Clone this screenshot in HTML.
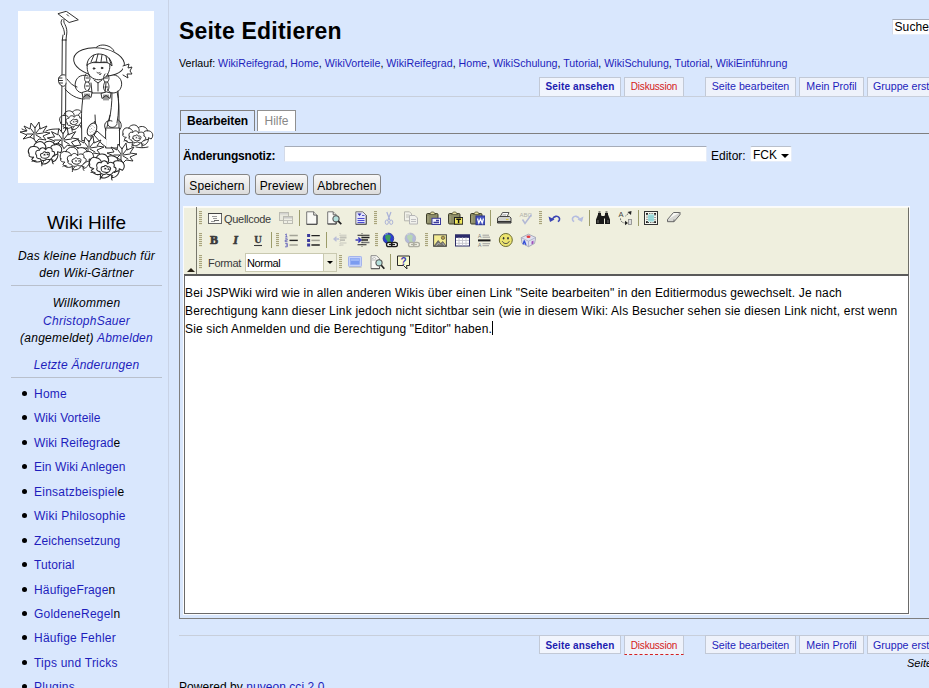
<!DOCTYPE html>
<html lang="de">
<head>
<meta charset="utf-8">
<title>Wiki Hilfe: Seite Editieren</title>
<style>
html,body{margin:0;padding:0;}
body{width:929px;height:688px;overflow:hidden;background:#d9e7fd;font-family:"Liberation Sans",sans-serif;font-size:12px;color:#000;position:relative;}
a{color:#1e1ebc;text-decoration:none;}
#side{position:absolute;left:0;top:0;width:168px;height:688px;border-right:1px solid #c9d3e6;}
#logo{position:absolute;left:18px;top:11px;width:136px;height:172px;background:#fff;}
#appname{position:absolute;left:11px;top:209px;width:151px;text-align:center;font-size:19px;line-height:27px;border-bottom:1px solid #c3cad6;height:22px;}
.sb{position:absolute;left:11px;width:151px;text-align:center;font-style:italic;font-size:12px;line-height:17.3px;letter-spacing:.25px;}
.hr{position:absolute;left:11px;width:151px;height:1px;background:#b9c0cc;}
#menu{position:absolute;left:0;top:382px;margin:0;padding:0;list-style:none;}
#menu li{position:relative;height:24.45px;line-height:24.45px;padding-left:34px;font-size:12px;white-space:nowrap;letter-spacing:.23px;}
#menu li:before{content:"";position:absolute;left:22px;top:9px;width:5px;height:5px;border-radius:50%;background:#000;}
#main{position:absolute;left:179px;top:0;width:750px;height:688px;overflow:hidden;}
h1{position:absolute;left:0;top:17px;margin:0;font-size:23px;line-height:28px;font-weight:bold;white-space:nowrap;letter-spacing:.2px;}
#crumb{position:absolute;left:0;top:56px;font-size:10.67px;line-height:14px;white-space:nowrap;}
#search{position:absolute;left:713px;top:19px;width:60px;height:16px;box-sizing:border-box;background:#fff;border:1px solid #e6edf9;border-top-color:#a6acb8;border-left-color:#d3dae8;font-size:12px;line-height:15px;padding-left:1.5px;white-space:nowrap;letter-spacing:.1px;}
.tabs{position:absolute;left:0;width:900px;height:19px;white-space:nowrap;font-size:10.67px;}
.tab{position:absolute;top:0;height:19px;line-height:17px;background:#eef2fb;border:1px solid #c2c9d6;border-bottom:0;box-sizing:border-box;text-align:center;color:#1e1ebc;}
.tab.act{font-weight:bold;color:#1c1cb0;background:#f1f5fd;font-size:10px;letter-spacing:.13px;}
.bot .tab{border-bottom:1px solid #c2c9d6;height:19px;line-height:19.5px;}
.tab.red{color:#d42020;font-size:10px;letter-spacing:-.2px;}
.line{position:absolute;left:0;width:750px;height:1px;background:#c8cfdb;}
#etabs .et{position:absolute;box-sizing:border-box;font-size:12px;text-align:center;}
#panel{position:absolute;left:0;top:133px;width:760px;height:486px;box-sizing:border-box;border:1px solid #7f7f7f;border-right:0;}
#lbl{position:absolute;left:4px;top:149px;font-weight:bold;font-size:12px;line-height:15px;white-space:nowrap;letter-spacing:-.2px;}
#note{position:absolute;left:105px;top:146px;width:423px;height:16px;box-sizing:border-box;background:#fff;border:1px solid #e6edf9;border-top-color:#a6acb8;border-left-color:#d3dae8;border-radius:1px;}
#edl{position:absolute;left:532px;top:149px;font-size:12px;line-height:15px;}
#sel{position:absolute;left:571px;top:146px;width:42px;height:16px;box-sizing:border-box;background:#fff;border:1px solid #e6edf9;border-top-color:#b9c0cc;border-radius:2px;font-size:12px;line-height:17px;padding-left:2px;}
#sel:after{content:"";position:absolute;right:2px;top:6.5px;border:4px solid transparent;border-top:4px solid #000;border-bottom:0;}
.btn{position:absolute;top:174px;height:21px;box-sizing:border-box;border:1px solid #858585;border-radius:3px;background:linear-gradient(#f8f8f8,#dcdcdc);font-size:12px;line-height:22px;text-align:center;white-space:nowrap;letter-spacing:.15px;}
#fck{position:absolute;left:4px;top:206px;width:727px;height:409px;box-sizing:border-box;border:1px solid #fafbfd;}
#tb{position:absolute;left:5px;top:207px;width:725px;height:67px;background:#efefde;border-top:1px solid #fbfbf4;border-right:1px solid #6e6e68;box-sizing:border-box;}
#tbh{position:absolute;left:0;top:-1px;width:12px;height:67px;border-right:1px solid #77776c;}
#tbh:after{content:"";position:absolute;left:2.5px;top:61px;border:4px solid transparent;border-bottom:4px solid #2a2418;border-top:0;}
.ic{position:absolute;}
.grip{position:absolute;width:3px;height:14px;background:repeating-linear-gradient(#a9a47c 0,#a9a47c 1px,#e6e6d0 1px,#e6e6d0 2px);}
.sep{position:absolute;width:1px;height:16px;background:#9c9c6a;}
.tbl{position:absolute;font-size:11px;line-height:16px;color:#3a3a3a;white-space:nowrap;letter-spacing:-0.3px;}
.combo{position:absolute;width:92px;height:19px;box-sizing:border-box;background:#fff;border:1px solid #c9c9b0;font-size:11px;line-height:17px;color:#000;}
.combo span{position:absolute;left:1px;top:1px;letter-spacing:-0.35px;}
.combo b{position:absolute;right:0;top:0;width:12px;height:17px;background:#efefde;border-left:1px solid #c9c9b0;}
.combo b:after{content:"";position:absolute;left:3px;top:7px;border:3px solid transparent;border-top:3px solid #000;border-bottom:0;}
#ed{position:absolute;left:5px;top:274px;width:725px;height:340px;box-sizing:border-box;background:#fff;border:1px solid #6a6a6a;border-top:2px solid #5a5a5a;}
#ed p{margin:0;position:absolute;left:0;top:8px;font-size:12px;line-height:18px;white-space:nowrap;letter-spacing:0.153px;}
#foot1{position:absolute;right:0;top:657px;font-size:11px;font-style:italic;white-space:nowrap;}
#pow{position:absolute;left:0;top:680px;letter-spacing:.05px;font-size:12px;line-height:15px;white-space:nowrap;}
</style>
</head>
<body>
<div id="side">
  <div id="logo"><svg width="136" height="172" viewBox="0 0 136 172"><g fill="none" stroke="#262626" stroke-width=".95" stroke-linejoin="round" stroke-linecap="round"><path d="M28 120c4-2 8-2 12-2M118 136c4 1 8 1 12 0M4 118c2 1 4 2 6 2"/><g transform="translate(56.0 110.0) rotate(-10) scale(0.90)"><path d="M-15-1c-2-4 1-8 5-7 1-4 7-6 10-2 3-3 9-2 10 2 5-1 8 4 5 8l-3-1c1 4-1 8-5 9l-2-3c-2 4-6 5-9 4l0-3c-3 2-7 1-9-2l2-2c-3 0-5-1-4-3z" fill="#fff"/><path d="M-10-8c2 0 4 1 5 3M0-10c1 1 2 3 1 5M10-8c-2 0-4 1-4 3M12 1c-2 0-3 1-4 2M7 10c-1-1-1-3 0-4M-4 11c0-2 1-3 2-4M-13 6c1-1 3-1 4 0" fill="none"/><path d="M-8 1c-2-3 0-6 3-5 1-3 5-3 6 0 2-3 7-2 6 2 3 0 3 4 0 5-1 3-4 3-6 2-2 2-6 1-6-1-2 0-4-1-3-3z" fill="#fff"/><path d="M-4 2c-1-2 0-3 2-3 1-2 3-1 3 0 2-1 4 0 3 2 0 2-2 3-4 3s-4-1-4-2z" fill="none"/><path d="M-1 1c0-1 1-1 1 0M2 1c0-1 1-1 1 0" fill="none"/></g><g transform="translate(119.0 126.0) rotate(8) scale(0.95)"><path d="M-15-1c-2-4 1-8 5-7 1-4 7-6 10-2 3-3 9-2 10 2 5-1 8 4 5 8l-3-1c1 4-1 8-5 9l-2-3c-2 4-6 5-9 4l0-3c-3 2-7 1-9-2l2-2c-3 0-5-1-4-3z" fill="#fff"/><path d="M-10-8c2 0 4 1 5 3M0-10c1 1 2 3 1 5M10-8c-2 0-4 1-4 3M12 1c-2 0-3 1-4 2M7 10c-1-1-1-3 0-4M-4 11c0-2 1-3 2-4M-13 6c1-1 3-1 4 0" fill="none"/><path d="M-8 1c-2-3 0-6 3-5 1-3 5-3 6 0 2-3 7-2 6 2 3 0 3 4 0 5-1 3-4 3-6 2-2 2-6 1-6-1-2 0-4-1-3-3z" fill="#fff"/><path d="M-4 2c-1-2 0-3 2-3 1-2 3-1 3 0 2-1 4 0 3 2 0 2-2 3-4 3s-4-1-4-2z" fill="none"/><path d="M-1 1c0-1 1-1 1 0M2 1c0-1 1-1 1 0" fill="none"/></g><g transform="translate(16.0 122.0) scale(1.00)"><path d="M0 6l-4-2-7 2 4-4-7-3 7-1-3-5 6 3 1-6 4 5 4-6 1 7 7-3-4 6 7 1-7 3 3 4-7-1-3 3z" fill="#fff"/><path d="M0 6l0-5M-4 4l3-3M-7 1l6 0M-3-4l3 4M1-6l0 6M6-5l-4 5M9 0l-7 1M7 5l-5-3" fill="none"/></g><path d="M40.300 2.600l8-2.300 12 8.500-8.800 2.600z" fill="#fff"/><path d="M49 3.500l1.500 1.500"/><path d="M44 8.500c-1.500 2-1 4 0 6 1.500 3 2.500 5 2.500 9M46 8.500c-.5 2 0 3.500 1 5 1.500 3 2.300 6 1.700 10"/><path d="M44.300 29l-.8 95M48 29l-.5 95M44.500 29h3.500M45 24l-.7 5M48.500 24l-.5 5" /><path d="M66 80c-2 10-2.500 20-2.500 30l.300 19.500 9 .5c.500-6 1-12 3-17 1-3 1-5 1-8" fill="#fff"/><path d="M98 76c2 8 3 16 3 24v18l-4 1.500" fill="none"/><path d="M66 80h32v30H64z" fill="#fff" stroke="none"/><path d="M77 104c0 4 .5 8 1 12M92 104c-1 4-2 8-3 12"/><path d="M73 72l1 10h13l1-10" fill="#fff"/><path d="M76 69l4 3 4-3M80 72v8"/><path d="M70 65c-5-2-11 0-12.500 6s2 11 8 11c3 0 5-2 5.500-4" fill="#fff"/><path d="M89 65c5-3 13-1 14.500 6 1 6-3 11-8.500 11-3 0-5-2-5.500-4" fill="#fff"/><path d="M59 76c-4-1-7-4-10-8M66 88c-7 0-14-4-19-10" /><path d="M47 64c-3-1-6 1-6.500 4s1 6 3.500 7 4-1 4-3" fill="#fff"/><path d="M41 67h3M41 69.500h3.500M41.500 72h3"/><path d="M100 80c1 10 1 22-1 32M94 82c0 10-1 20-3 28" /><path d="M90 110c-1 3 0 5 2 6 3 1 6 0 7-3" fill="#fff"/><path d="M77 38c2-4 8-5 13-3 3 1 5 3 6 5" fill="#fff"/><ellipse cx="81" cy="51" rx="25.500" ry="14" transform="rotate(8 81 51)" fill="#fff"/><path d="M69.500 52c-1 6 0 12 5 15s11 2 14-2 4-9 3-13z" fill="#fff"/><path d="M69 54c0-6 5-11 12-11s13 5 13 12c-3-3-5-4-8-4l-4 .5-4-.5c-3 0-6 1-9 3z" fill="#fff"/><path d="M76 44l-3 7M80 43l-2 8M84 43.500l-1 7.500M88 45l1 6M91 47l2 6" /><circle cx="76" cy="57.500" r=".8" fill="#2e2e2e"/><circle cx="84" cy="57" r=".8" fill="#2e2e2e"/><path d="M79 61.500c1 .8 2 .8 3 0M81.500 63.500c.8.500 1.500 0 1.500-1"/><path d="M68 63c-2 3-2 6 0 8-2 3-2 6 0 8M70.500 63c2 3 2 6 0 8 2 3 2 6 0 8M68 67h2.500M68 71h2.500M68 75h2.500" /><path d="M87 63c-2 3-2 6 0 8-2 3-2 7 0 9M89.500 63c2 3 2 6 0 8 2 3 2 7 0 9M87 67h2.500M87 71h2.500M87 76h2.500" /><path d="M69 80l-5 1.500 1 5 4-3 4 3 1-5zM67 83v5M69 83v5M71 83v5" fill="#fff"/><path d="M88 81l-5 1.500 1 5 4-3 4 3 1-5zM86 84v5M88 84v5M90 84v5" fill="#fff"/><path d="M105 55l6-2-1 4 4-1-2 4 2 3-5 0 1 4-5-3" fill="#fff"/><path d="M88 117h13.500v20H88z" fill="#fff"/><path d="M88 128l-9-8 -3 4 8 9 4 3" fill="#fff"/><ellipse cx="74" cy="118.500" rx="4.300" ry="6.800" transform="rotate(25 74 118.500)" fill="#fff"/><g stroke-width=".5"><path d="M72 115l.3.300M74 114.500l.3.300M76 116l.3.300M71.500 118l.3.300M73.500 117.500l.3.300M75.500 119l.3.300M72 121l.3.300M74 120.500l.3.300M76 122l.3.300M73 123.500l.3.300"/></g><path d="M88 119c-4-6 1-11 6-9M101.500 119c3-3 2-8-1-10"/><g transform="translate(44.0 128.0) scale(1.05)"><path d="M0 6l-4-2-7 2 4-4-7-3 7-1-3-5 6 3 1-6 4 5 4-6 1 7 7-3-4 6 7 1-7 3 3 4-7-1-3 3z" fill="#fff"/><path d="M0 6l0-5M-4 4l3-3M-7 1l6 0M-3-4l3 4M1-6l0 6M6-5l-4 5M9 0l-7 1M7 5l-5-3" fill="none"/></g><g transform="translate(70.0 136.0) scale(1.00)"><path d="M0 6l-4-2-7 2 4-4-7-3 7-1-3-5 6 3 1-6 4 5 4-6 1 7 7-3-4 6 7 1-7 3 3 4-7-1-3 3z" fill="#fff"/><path d="M0 6l0-5M-4 4l3-3M-7 1l6 0M-3-4l3 4M1-6l0 6M6-5l-4 5M9 0l-7 1M7 5l-5-3" fill="none"/></g><g transform="translate(103.0 143.0) scale(1.00)"><path d="M0 6l-4-2-7 2 4-4-7-3 7-1-3-5 6 3 1-6 4 5 4-6 1 7 7-3-4 6 7 1-7 3 3 4-7-1-3 3z" fill="#fff"/><path d="M0 6l0-5M-4 4l3-3M-7 1l6 0M-3-4l3 4M1-6l0 6M6-5l-4 5M9 0l-7 1M7 5l-5-3" fill="none"/></g><g transform="translate(27.0 143.0) rotate(-5) scale(1.05)"><path d="M-15-1c-2-4 1-8 5-7 1-4 7-6 10-2 3-3 9-2 10 2 5-1 8 4 5 8l-3-1c1 4-1 8-5 9l-2-3c-2 4-6 5-9 4l0-3c-3 2-7 1-9-2l2-2c-3 0-5-1-4-3z" fill="#fff"/><path d="M-10-8c2 0 4 1 5 3M0-10c1 1 2 3 1 5M10-8c-2 0-4 1-4 3M12 1c-2 0-3 1-4 2M7 10c-1-1-1-3 0-4M-4 11c0-2 1-3 2-4M-13 6c1-1 3-1 4 0" fill="none"/><path d="M-8 1c-2-3 0-6 3-5 1-3 5-3 6 0 2-3 7-2 6 2 3 0 3 4 0 5-1 3-4 3-6 2-2 2-6 1-6-1-2 0-4-1-3-3z" fill="#fff"/><path d="M-4 2c-1-2 0-3 2-3 1-2 3-1 3 0 2-1 4 0 3 2 0 2-2 3-4 3s-4-1-4-2z" fill="none"/><path d="M-1 1c0-1 1-1 1 0M2 1c0-1 1-1 1 0" fill="none"/></g><g transform="translate(58.5 149.0) rotate(0) scale(1.05)"><path d="M-15-1c-2-4 1-8 5-7 1-4 7-6 10-2 3-3 9-2 10 2 5-1 8 4 5 8l-3-1c1 4-1 8-5 9l-2-3c-2 4-6 5-9 4l0-3c-3 2-7 1-9-2l2-2c-3 0-5-1-4-3z" fill="#fff"/><path d="M-10-8c2 0 4 1 5 3M0-10c1 1 2 3 1 5M10-8c-2 0-4 1-4 3M12 1c-2 0-3 1-4 2M7 10c-1-1-1-3 0-4M-4 11c0-2 1-3 2-4M-13 6c1-1 3-1 4 0" fill="none"/><path d="M-8 1c-2-3 0-6 3-5 1-3 5-3 6 0 2-3 7-2 6 2 3 0 3 4 0 5-1 3-4 3-6 2-2 2-6 1-6-1-2 0-4-1-3-3z" fill="#fff"/><path d="M-4 2c-1-2 0-3 2-3 1-2 3-1 3 0 2-1 4 0 3 2 0 2-2 3-4 3s-4-1-4-2z" fill="none"/><path d="M-1 1c0-1 1-1 1 0M2 1c0-1 1-1 1 0" fill="none"/></g><g transform="translate(88.0 157.0) rotate(8) scale(1.10)"><path d="M-15-1c-2-4 1-8 5-7 1-4 7-6 10-2 3-3 9-2 10 2 5-1 8 4 5 8l-3-1c1 4-1 8-5 9l-2-3c-2 4-6 5-9 4l0-3c-3 2-7 1-9-2l2-2c-3 0-5-1-4-3z" fill="#fff"/><path d="M-10-8c2 0 4 1 5 3M0-10c1 1 2 3 1 5M10-8c-2 0-4 1-4 3M12 1c-2 0-3 1-4 2M7 10c-1-1-1-3 0-4M-4 11c0-2 1-3 2-4M-13 6c1-1 3-1 4 0" fill="none"/><path d="M-8 1c-2-3 0-6 3-5 1-3 5-3 6 0 2-3 7-2 6 2 3 0 3 4 0 5-1 3-4 3-6 2-2 2-6 1-6-1-2 0-4-1-3-3z" fill="#fff"/><path d="M-4 2c-1-2 0-3 2-3 1-2 3-1 3 0 2-1 4 0 3 2 0 2-2 3-4 3s-4-1-4-2z" fill="none"/><path d="M-1 1c0-1 1-1 1 0M2 1c0-1 1-1 1 0" fill="none"/></g></g></svg></div>
  <div id="appname">Wiki Hilfe</div>
  <div class="sb" style="top:248px;line-height:17px">Das kleine Handbuch für<br>den Wiki-Gärtner</div>
  <div class="hr" style="top:285px"></div>
  <div class="sb" style="top:295px">Willkommen</div>
  <div class="sb" style="top:312.5px"><a href="#">ChristophSauer</a></div>
  <div class="sb" style="top:329.5px">(angemeldet) <a href="#">Abmelden</a></div>
  <div class="sb" style="top:357px"><a href="#">Letzte Änderungen</a></div>
  <div class="hr" style="top:377px"></div>
  <ul id="menu">
    <li><a href="#">Home</a></li>
    <li style="letter-spacing:.04px"><a href="#">Wiki Vorteile</a></li>
    <li style="letter-spacing:.11px"><a href="#">Wiki Reifegrad</a>e</li>
    <li style="letter-spacing:.09px"><a href="#">Ein Wiki Anlegen</a></li>
    <li><a href="#">Einsatzbeispiel</a>e</li>
    <li><a href="#">Wiki Philosophie</a></li>
    <li style="letter-spacing:.12px"><a href="#">Zeichensetzung</a></li>
    <li style="letter-spacing:.12px"><a href="#">Tutorial</a></li>
    <li style="letter-spacing:.15px"><a href="#">HäufigeFrage</a>n</li>
    <li><a href="#">GoldeneRegel</a>n</li>
    <li><a href="#">Häufige Fehler</a></li>
    <li><a href="#">Tips und Tricks</a></li>
    <li><a href="#">Plugins</a></li>
  </ul>
</div>
<div id="main">
  <h1>Seite Editieren</h1>
  <div id="search">Suche</div>
  <div id="crumb">Verlauf: <a href="#">WikiReifegrad</a>, <a href="#">Home</a>, <a href="#">WikiVorteile</a>, <a href="#">WikiReifegrad</a>, <a href="#">Home</a>, <a href="#">WikiSchulung</a>, <a href="#">Tutorial</a>, <a href="#">WikiSchulung</a>, <a href="#">Tutorial</a>, <a href="#">WikiEinführung</a></div>

  <div class="tabs" style="top:77px">
    <div class="tab act" style="left:360px;width:82px">Seite ansehen</div>
    <div class="tab red" style="left:445px;width:60px">Diskussion</div>
    <div class="tab" style="left:526px;width:91px">Seite bearbeiten</div>
    <div class="tab" style="left:620px;width:65px">Mein Profil</div>
    <div class="tab" style="left:688px;width:100px;text-align:left;padding-left:5px">Gruppe erstellen</div>
  </div>
  <div class="line" style="top:96px"></div>

  <div id="panel"></div>
  <div id="etabs">
    <div class="et" style="left:1px;top:110px;width:75px;height:21px;border:1px solid #808080;border-bottom:0;background:#d9e7fd;font-weight:bold;line-height:20px;letter-spacing:-.1px">Bearbeiten</div>
    <div class="et" style="left:78px;top:110px;width:39px;height:21px;border:1px solid #909090;border-bottom:0;background:#fff;color:#888;line-height:20px">Hilfe</div>
  </div>

  <div id="lbl">Änderungsnotiz:</div>
  <div id="note"></div>
  <div id="edl">Editor:</div>
  <div id="sel">FCK</div>
  <div class="btn" style="left:5px;width:66px">Speichern</div>
  <div class="btn" style="left:76px;width:53px">Preview</div>
  <div class="btn" style="left:134px;width:68px">Abbrechen</div>

  <div id="fck"></div>
  <div id="tb">
    <div id="tbh"></div>
<i class="grip" style="left:15px;top:3px"></i>
<svg class="ic" style="left:23px;top:2px" width="16" height="16" viewBox="0 0 16 16"><rect x="1.500" y="3.500" width="13" height="10" fill="#fbfbf6" stroke="#666"/><path d="M1 3.500h14" stroke="#444"/><path d="M5 6.500h5M6 8.500h4M4 11.500h4" stroke="#999" fill="none"/><path d="M7 10.500h5" stroke="#666" fill="none"/></svg>
<span class="tbl" style="left:40px;top:3px">Quellcode</span>
<svg class="ic" style="left:94px;top:2px" width="16" height="16" viewBox="0 0 16 16"><g opacity=".5"><rect x="1.500" y="2.500" width="9" height="8" fill="#e4e4e0" stroke="#888"/><rect x="5.500" y="6.500" width="9" height="7" fill="#f0f0ec" stroke="#888"/><path d="M6 10.500h8.500M9.500 10.500v3" stroke="#999" fill="none"/><rect x="6" y="7" width="8" height="1.500" fill="#a8a8b8"/><rect x="2" y="3" width="8" height="1.500" fill="#b8b8c4"/></g></svg>
<i class="sep" style="left:115px;top:2px"></i>
<svg class="ic" style="left:120px;top:2px" width="16" height="16" viewBox="0 0 16 16"><path d="M2.700 1.800h7l3.300 3.300v9.200H2.700z" fill="#f9f9f5" stroke="#777"/><path d="M9.700 1.800v3.300h3.300" fill="#e8e8e0" stroke="#666"/><path d="M13 5.100v9.200H2.700" fill="none" stroke="#444"/></svg>
<svg class="ic" style="left:142px;top:2px" width="16" height="16" viewBox="0 0 16 16"><path d="M1.700 1.800h5.500l3 3v9.200H1.700z" fill="#f9f9f5" stroke="#777"/><path d="M7.200 1.800v3h3" fill="#e8e8e0" stroke="#666"/><path d="M10.200 12v2H1.700" fill="none" stroke="#444"/><circle cx="10" cy="8.800" r="3.100" fill="#b4e0dc" stroke="#555" stroke-width="1.100"/><path d="M12.300 11.200l3 3" stroke="#222" stroke-width="1.700" fill="none"/></svg>
<svg class="ic" style="left:169px;top:2px" width="16" height="16" viewBox="0 0 16 16"><path d="M2.800 1.800h7l3.500 3.500v9H2.800z" fill="#e4e4fb" stroke="#777"/><path d="M13.300 5.300v9H2.800" fill="none" stroke="#555"/><path d="M4.500 3.500h4l-2 2.500z" fill="#2a2ab0"/><path d="M9 5.500h2.500" stroke="#5a5ac8"/><path d="M4.500 8.500h7M4.500 10.500h7M4.500 12.500h7" stroke="#4a4ad0" stroke-width="1" fill="none"/></svg>
<i class="grip" style="left:190px;top:3px"></i>
<svg class="ic" style="left:197px;top:2px" width="16" height="16" viewBox="0 0 16 16"><g stroke="#aab2d8" fill="none"><path d="M5.800 2l3 8M10 2L7 10" stroke-width="1.200"/><ellipse cx="5.800" cy="12.200" rx="1.600" ry="2.200"/><ellipse cx="10.200" cy="12.200" rx="1.600" ry="2.200"/></g></svg>
<svg class="ic" style="left:219px;top:2px" width="16" height="16" viewBox="0 0 16 16"><g opacity=".55"><path d="M1.500 1.800h5l2 2v7h-7z" fill="#f4f4f4" stroke="#888"/><path d="M3 5h3.500M3 7h3" stroke="#999" fill="none"/><path d="M6.500 5.500h5.500l2.500 2.500v6h-8z" fill="#f4f4f8" stroke="#889"/><path d="M8 9.500h5M8 11.500h5" stroke="#99a" fill="none"/></g></svg>
<svg class="ic" style="left:241px;top:2px" width="16" height="16" viewBox="0 0 16 16"><rect x="1.500" y="3.500" width="11.500" height="10.500" rx="1.200" fill="#8e8e68" stroke="#3c3c2a"/><path d="M4.500 4.500l1.800-2.500h2.400l1.800 2.500z" fill="#e4dca0" stroke="#55553a" stroke-width=".8"/><path d="M3 6v6.500" stroke="#a8a884"/><rect x="7" y="8.300" width="8.500" height="6.200" fill="#f4f4ff" stroke="#3a3a9c"/><path d="M8.500 12.500h5.500M11 10.500h3" stroke="#3a3a9c" stroke-width="1.300"/></svg>
<svg class="ic" style="left:263px;top:2px" width="16" height="16" viewBox="0 0 16 16"><rect x="1.500" y="3.500" width="11.500" height="10.500" rx="1.200" fill="#8e8e68" stroke="#3c3c2a"/><path d="M4.500 4.500l1.800-2.500h2.400l1.800 2.500z" fill="#e4dca0" stroke="#55553a" stroke-width=".8"/><path d="M3 6v6.500" stroke="#a8a884"/><rect x="7.500" y="7.500" width="8.200" height="6.700" fill="#f0e85c" stroke="#222"/><path d="M9.300 9.300h4.600M11.600 9.300v4" stroke="#111" stroke-width="1.500" fill="none"/></svg>
<svg class="ic" style="left:285px;top:2px" width="16" height="16" viewBox="0 0 16 16"><rect x="1.500" y="3.500" width="11.500" height="10.500" rx="1.200" fill="#8e8e68" stroke="#3c3c2a"/><path d="M4.500 4.500l1.800-2.500h2.400l1.800 2.500z" fill="#e4dca0" stroke="#55553a" stroke-width=".8"/><path d="M3 6v6.500" stroke="#a8a884"/><rect x="7" y="6" width="9" height="8.700" fill="#4a58c4" stroke="#2a3490"/><path d="M8.500 8.500l1.300 4.500 1.700-4 1.700 4 1.300-4.500" stroke="#fff" stroke-width="1.200" fill="none"/></svg>
<i class="sep" style="left:306px;top:2px"></i>
<svg class="ic" style="left:312px;top:2px" width="16" height="16" viewBox="0 0 16 16"><path d="M4 7l2.500-4.500h6.500l-2 4.500z" fill="#fafafa" stroke="#555"/><path d="M6.500 4.500h4M6 5.800h4" stroke="#aaa" stroke-width=".7"/><path d="M1.500 8l2-1.500h10l1.500 1.500v3.500h-13.500z" fill="#d0d0cc" stroke="#444"/><path d="M1.500 11.500h13.500v1.500h-13.500z" fill="#777" stroke="#333"/><path d="M10 9.500h2.500" stroke="#d8c840" stroke-width="1.200"/></svg>
<svg class="ic" style="left:334px;top:2px" width="16" height="16" viewBox="0 0 16 16"><g opacity=".6"><text x="1.500" y="6.500" font-family="Liberation Sans,sans-serif" font-size="6" fill="#888">ABC</text><path d="M4.500 9.500l2.500 4L13.500 4.500" stroke="#8a94d0" stroke-width="1.500" fill="none"/></g></svg>
<i class="grip" style="left:355px;top:3px"></i>
<svg class="ic" style="left:363px;top:2px" width="16" height="16" viewBox="0 0 16 16"><path d="M5.500 9c1.500-3 5-3.500 6.500-1.500 1.200 1.700.3 3.500-1.200 4" stroke="#3a44b4" stroke-width="1.600" fill="none"/><path d="M1.500 6.500l1.500 5.500 4.500-2.500z" fill="#3a44b4"/></svg>
<svg class="ic" style="left:385px;top:2px" width="16" height="16" viewBox="0 0 16 16"><path d="M10.500 9c-1.500-3-5-3.500-6.500-1.500-1.200 1.700-.3 3.500 1.200 4" stroke="#b4bce0" stroke-width="1.600" fill="none"/><path d="M14.500 6.500l-1.500 5.500-4.500-2.500z" fill="#b4bce0"/></svg>
<i class="sep" style="left:405px;top:2px"></i>
<svg class="ic" style="left:411px;top:2px" width="16" height="16" viewBox="0 0 16 16"><path d="M1 14V9.500l2-5V3h3v1.500l.5 1.500h3l.5-1.500V3h3v1.500l2 5V14h-5V8.500h-1V14z" fill="#1a1a1a"/><path d="M3.500 2h2M10.500 2h2" stroke="#1a1a1a" stroke-width="1.200"/><path d="M3 10v3M13 10v3" stroke="#888" stroke-width=".8"/></svg>
<svg class="ic" style="left:433px;top:2px" width="16" height="16" viewBox="0 0 16 16"><text x="1.500" y="7" font-family="Liberation Sans,sans-serif" font-size="7.500" fill="#444">A</text><rect x="11.500" y="9.500" width="3" height="5" fill="#ddd" stroke="#888" stroke-width=".8"/><path d="M3.500 8.500c0 3 2 4.500 5 4.500" stroke="#555" stroke-dasharray="1.200 1" fill="none"/><path d="M8 10.800l3 2.200-3 2.200z" fill="#222"/><path d="M8.500 6l4-3.500" stroke="#555" stroke-dasharray="1.200 1"/><path d="M14.500 1l-.5 4-3.500-3z" fill="#222"/></svg>
<i class="sep" style="left:454px;top:2px"></i>
<svg class="ic" style="left:459px;top:2px" width="16" height="16" viewBox="0 0 16 16"><rect x="1.500" y="1.500" width="13" height="13" fill="#f6f6ee" stroke="#333"/><rect x="5" y="4.500" width="6" height="7" fill="#a4e0e0"/><path d="M7 4.500v7M9 4.500v7M5 7h6M5 9.500h6" stroke="#8accd0" stroke-width=".6"/><rect x="4" y="3.500" width="8" height="9" fill="none" stroke="#333" stroke-width=".9" stroke-dasharray="1 1.300"/><path d="M3 3h1.800v1.800H3zM11.200 3H13v1.800h-1.800zM3 11.200h1.800V13H3zM11.200 11.200H13V13h-1.800z" fill="#222"/></svg>
<svg class="ic" style="left:482px;top:2px" width="16" height="16" viewBox="0 0 16 16"><path d="M1.500 9.500L7.500 2.500h6.500L8 9.500z" fill="#f8f8f4" stroke="#666"/><path d="M1.500 9.500v2.200H8l6-7V2.500M8 9.500v2.200" fill="#d8d8d4" stroke="#666"/></svg>
<i class="grip" style="left:15px;top:25px"></i>
<svg class="ic" style="left:22px;top:24px" width="16" height="16" viewBox="0 0 16 16"><text x="8" y="12" text-anchor="middle" font-family="Liberation Serif,serif" font-size="12" font-weight="bold" fill="#3a3a3a" stroke="#3a3a3a" stroke-width=".7">B</text></svg>
<svg class="ic" style="left:44px;top:24px" width="16" height="16" viewBox="0 0 16 16"><text x="7.500" y="12" text-anchor="middle" font-family="Liberation Serif,serif" font-size="12" font-weight="bold" font-style="italic" fill="#3a3a3a" stroke="#3a3a3a" stroke-width=".6">I</text></svg>
<svg class="ic" style="left:66px;top:24px" width="16" height="16" viewBox="0 0 16 16"><text x="8" y="11" text-anchor="middle" font-family="Liberation Serif,serif" font-size="10.500" font-weight="bold" fill="#3a3a3a" stroke="#3a3a3a" stroke-width=".3">U</text><path d="M4 13.500h8" stroke="#3a3a3a" stroke-width="1.100"/></svg>
<i class="sep" style="left:87px;top:24px"></i>
<i class="grip" style="left:92px;top:25px"></i>
<svg class="ic" style="left:99px;top:24px" width="16" height="16" viewBox="0 0 16 16"><path d="M6.500 3.600h8.300M6.500 13h8.300" stroke="#a4a498" stroke-width="1.500"/><path d="M6.500 8.400h8.300" stroke="#222" stroke-width="1.400"/><path d="M3.300 1.800v3.200M2.300 2.800l1-1M2.200 5h2.300M2.200 6.800h2v1.400h-2v1.500h2.300M2.200 11.400h2.100v3.400h-2.300M2.800 13h1.500" stroke="#4a4ab4" stroke-width=".75" fill="none"/></svg>
<svg class="ic" style="left:121px;top:24px" width="16" height="16" viewBox="0 0 16 16"><path d="M6.400 3.600h8.400M6.400 13h8.400" stroke="#222" stroke-width="1.400"/><path d="M6.400 8.400h8.400" stroke="#a4a498" stroke-width="1.500"/><path d="M2.100 2h3v3h-3zM2.100 6.900h3v3h-3zM2.100 11.500h3v3h-3z" fill="#3a3a9c"/></svg>
<i class="sep" style="left:142px;top:24px"></i>
<svg class="ic" style="left:148px;top:24px" width="16" height="16" viewBox="0 0 16 16"><g opacity=".45"><path d="M7.500 3.200h7M8 11h6.500M7.500 13h4" stroke="#999" stroke-width="1"/><path d="M8 5.500h6.500M8 8.200h5" stroke="#888" stroke-width="1.800"/><path d="M7 7H2.500M4.500 4.800L2 7l2.500 2.200" stroke="#7a84d0" stroke-width="1.300" fill="none"/><path d="M8 1v14" stroke="#999" stroke-dasharray="1 1" stroke-width=".7"/></g></svg>
<svg class="ic" style="left:170px;top:24px" width="16" height="16" viewBox="0 0 16 16"><path d="M3.500 3.200h12M3.500 12.800h9" stroke="#222" stroke-width="1.100"/><path d="M7.500 5.500h8M7.500 8h6.500" stroke="#222" stroke-width="1.700"/><path d="M7.500 10.500h8" stroke="#777" stroke-width="1.500"/><path d="M1.500 8h5M4.300 5.500L7 8l-2.700 2.500" stroke="#3a3ab8" stroke-width="1.500" fill="none"/><path d="M8 1v14" stroke="#333" stroke-dasharray="1 1.200" stroke-width=".8"/></svg>
<i class="grip" style="left:191px;top:25px"></i>
<svg class="ic" style="left:198px;top:24px" width="16" height="16" viewBox="0 0 16 16"><circle cx="6.400" cy="6.400" r="5.300" fill="#2c3ed0" stroke="#26308a" stroke-width=".8"/><path d="M3.500 3.500c1.500-1.500 4-1.500 5 0s-.5 2.500-.5 4 1.500 1.500 1 3-3 .5-3.500-1S2 6 3.500 3.500z" fill="#3c9c5c"/><path d="M3 3c.8-.8 2-1.300 3-1.300" stroke="#8aa4f0" stroke-width=".9" fill="none"/><rect x="4.500" y="10.300" width="6" height="4.400" rx="2.200" fill="#f0f0ec" stroke="#1c1c1c" stroke-width="1.300"/><rect x="9.500" y="10.300" width="6" height="4.400" rx="2.200" fill="#f0f0ec" stroke="#1c1c1c" stroke-width="1.300"/><path d="M7 12.500h6" stroke="#1c1c1c" stroke-width="1.300"/></svg>
<svg class="ic" style="left:220px;top:24px" width="16" height="16" viewBox="0 0 16 16"><g opacity=".3"><circle cx="6.400" cy="6.400" r="5.300" fill="#2c3ed0" stroke="#26308a" stroke-width=".8"/><path d="M3.500 3.500c1.500-1.500 4-1.500 5 0s-.5 2.500-.5 4 1.500 1.500 1 3-3 .5-3.500-1S2 6 3.500 3.500z" fill="#3c9c5c"/><path d="M3 3c.8-.8 2-1.300 3-1.300" stroke="#8aa4f0" stroke-width=".9" fill="none"/><rect x="4.500" y="10.300" width="6" height="4.400" rx="2.200" fill="#f0f0ec" stroke="#1c1c1c" stroke-width="1.300"/><rect x="9.500" y="10.300" width="6" height="4.400" rx="2.200" fill="#f0f0ec" stroke="#1c1c1c" stroke-width="1.300"/><path d="M7 12.500h6" stroke="#1c1c1c" stroke-width="1.300"/></g></svg>
<i class="grip" style="left:241px;top:25px"></i>
<svg class="ic" style="left:248px;top:24px" width="16" height="16" viewBox="0 0 16 16"><rect x="1.600" y="2.800" width="12.800" height="11.500" fill="#f4ec94" stroke="#444"/><circle cx="11" cy="5.800" r="1.700" fill="#b89c50" stroke="#554" stroke-width=".7"/><path d="M2.200 13.800l4-5.300 2.500 3 2-2 3.300 4.300z" fill="#777" stroke="#444" stroke-width=".6"/><path d="M4.500 13.500l2-2.500 1.500 1.500M10.700 11l1.800 2.500" stroke="#ccc" stroke-width=".7" fill="none"/></svg>
<svg class="ic" style="left:270px;top:24px" width="16" height="16" viewBox="0 0 16 16"><rect x="1.500" y="3" width="14" height="11" fill="#fff" stroke="#2c2c66"/><rect x="1.500" y="3" width="14" height="2.300" fill="#2c2c70" stroke="#2c2c66"/><path d="M2 8.500h13M2 11.300h13M5 5.500v8M8.500 5.500v8M12 5.500v8" stroke="#c4c4cc" stroke-width=".9"/></svg>
<svg class="ic" style="left:293px;top:24px" width="16" height="16" viewBox="0 0 16 16"><path d="M1 8.400h12.500" stroke="#1c1c1c" stroke-width="2"/><path d="M5.500 3.200h6.500M5.500 5.200h7.500M5.500 11.700h7.500M5.500 13.700h6.500" stroke="#999" stroke-width=".9"/><text x="1" y="6" font-family="Liberation Sans,sans-serif" font-size="5" fill="#777">A</text><text x="1" y="14.500" font-family="Liberation Sans,sans-serif" font-size="5" fill="#777">A</text></svg>
<svg class="ic" style="left:314px;top:24px" width="16" height="16" viewBox="0 0 16 16"><circle cx="7.800" cy="8" r="6.500" fill="#ece470" stroke="#6c6c30" stroke-width="1"/><ellipse cx="5.600" cy="6.300" rx=".8" ry="1.200" fill="#333"/><ellipse cx="10" cy="6.300" rx=".8" ry="1.200" fill="#333"/><path d="M4.300 9.300c1.500 3 5.500 3 7 0" stroke="#444" stroke-width="1" fill="none"/></svg>
<svg class="ic" style="left:336px;top:24px" width="16" height="16" viewBox="0 0 16 16"><path d="M8.500 2.200l7.300 3.300-1.300 6-6 3.200-6.500-3.500-.8-5.500z" fill="#e0e2f0" stroke="#9a9cb0" stroke-width=".8"/><path d="M1.200 5.700l7.300 3.500 7.300-3.700M8.500 9.200v5.500" stroke="#a8aac0" stroke-width=".8" fill="none"/><ellipse cx="8.500" cy="4.800" rx="2" ry="1.300" fill="#e43c3c"/><path d="M4.300 8.500l-1.300 4M4.300 8.500l1.700 4.500M3.500 11h2" stroke="#3450d8" stroke-width="1.200" fill="none"/><path d="M11.500 9.500l2-1v3l-2 1z" fill="#a050b8"/></svg>
<i class="grip" style="left:15px;top:47px"></i>
<span class="tbl" style="left:24px;top:47px">Format</span>
<div class="combo" style="left:61px;top:45px"><span>Normal</span><b></b></div>
<i class="grip" style="left:155px;top:47px"></i>
<svg class="ic" style="left:163px;top:46px" width="16" height="16" viewBox="0 0 16 16"><rect x="1.500" y="2.500" width="13" height="10" rx=".8" fill="#c6d2fa" stroke="#a4b4ec"/><rect x="3.500" y="4.500" width="9" height="6" fill="#7c9cf0" stroke="#8ca8f4" stroke-width=".6"/><path d="M4 6h8" stroke="#b8ccfc" stroke-width="1.200"/><path d="M2 13.300h12.500" stroke="#c4c4b8"/></svg>
<svg class="ic" style="left:185px;top:46px" width="16" height="16" viewBox="0 0 16 16"><path d="M2 1.700h5.500l3 3v10H2z" fill="#f9f9f5" stroke="#888"/><path d="M10.500 13v1.700H2" fill="none" stroke="#555"/><path d="M3 4.500l2.500-1 2 1.500M3 6h4" stroke="#aaa" stroke-width=".8" fill="none"/><circle cx="10" cy="8.800" r="3.100" fill="#b4e0dc" stroke="#555" stroke-width="1.100"/><path d="M12.300 11.200l3 3.500" stroke="#222" stroke-width="1.700" fill="none"/></svg>
<i class="sep" style="left:206px;top:46px"></i>
<svg class="ic" style="left:212px;top:46px" width="16" height="16" viewBox="0 0 16 16"><path d="M1.500 2h12v9.500h-3l.5 3.500-3.500-3.500h-6z" fill="#fafacc" stroke="#2a2a2a"/><text x="7.500" y="11" text-anchor="middle" font-family="Liberation Sans,sans-serif" font-size="10" font-weight="bold" fill="#3a3ab4">?</text></svg>
  </div>
  <div id="ed"><p>Bei JSPWiki wird wie in allen anderen Wikis über einen Link "Seite bearbeiten" in den Editiermodus gewechselt. Je nach<br><span style="letter-spacing:.187px">Berechtigung kann dieser Link jedoch nicht sichtbar sein (wie in diesem Wiki: Als Besucher sehen sie diesen Link nicht, erst wenn</span><br>Sie sich Anmelden und die Berechtigung "Editor" haben.<span style="display:inline-block;width:1px;height:14px;background:#000;vertical-align:-2px"></span></p></div>

  <div class="line" style="top:635px"></div>
  <div class="tabs bot" style="top:635px">
    <div class="tab act" style="left:360px;width:82px">Seite ansehen</div>
    <div class="tab red" style="left:445px;width:60px;height:20px;border-bottom:1px dashed #d42020">Diskussion</div>
    <div class="tab" style="left:526px;width:91px">Seite bearbeiten</div>
    <div class="tab" style="left:620px;width:65px">Mein Profil</div>
    <div class="tab" style="left:688px;width:100px;text-align:left;padding-left:5px">Gruppe erstellen</div>
  </div>
  <div id="foot1" style="left:728px;right:auto">Seite zuletzt geändert</div>
  <div id="pow">Powered by <a href="#">nuveon cci 2.0</a></div>
</div>
</body>
</html>
